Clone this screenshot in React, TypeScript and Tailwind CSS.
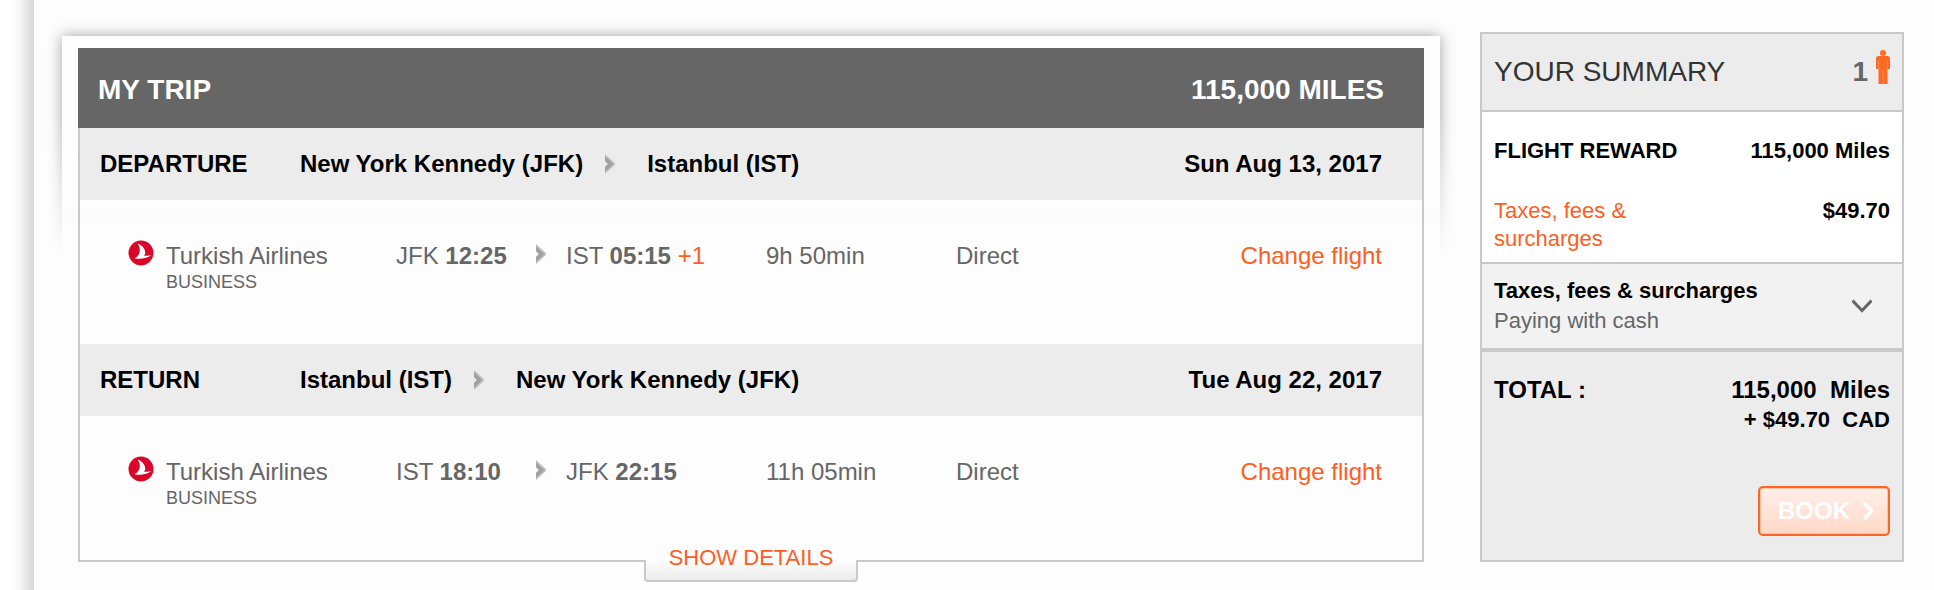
import { useState } from "react";

type Flight = {
  label: string;
  from: string;
  to: string;
  date: string;
  airline: string;
  cabin: string;
  depCode: string;
  depTime: string;
  arrCode: string;
  arrTime: string;
  dayShift?: string;
  duration: string;
  stops: string;
};

const flights: Flight[] = [
  {
    label: "DEPARTURE",
    from: "New York Kennedy (JFK)",
    to: "Istanbul (IST)",
    date: "Sun Aug 13, 2017",
    airline: "Turkish Airlines",
    cabin: "BUSINESS",
    depCode: "JFK",
    depTime: "12:25",
    arrCode: "IST",
    arrTime: "05:15",
    dayShift: "+1",
    duration: "9h 50min",
    stops: "Direct",
  },
  {
    label: "RETURN",
    from: "Istanbul (IST)",
    to: "New York Kennedy (JFK)",
    date: "Tue Aug 22, 2017",
    airline: "Turkish Airlines",
    cabin: "BUSINESS",
    depCode: "IST",
    depTime: "18:10",
    arrCode: "JFK",
    arrTime: "22:15",
    duration: "11h 05min",
    stops: "Direct",
  },
];

const Arrow = ({ className = "" }: { className?: string }) => (
  <svg className={`h-5 w-[10px] shrink-0 ${className}`} viewBox="0 0 10 20" aria-hidden="true">
    <path d="M0 0 L10 9 V11 L0 20 V13 L3 10 L0 7 Z" fill="#c4c4c4" />
    <path d="M0 2 L8.500 10 L0 18 V13 L3 10 L0 7 Z" fill="#a0a0a0" />
  </svg>
);

const AirlineLogo = () => (
  <svg className="h-[26px] w-[26px] shrink-0" viewBox="0 0 26 26" aria-hidden="true">
    <circle cx="13" cy="13" r="12.5" fill="#d9062a" />
    <path
      d="M9.500 3.500 C14 5 17 8.500 17.200 12 C17.300 13.800 16.800 15 16 15.700 C18.500 15.900 21.500 15.600 23.500 15 C20 18 12.500 19.500 6.500 18.500 C10 16.500 11.800 13.500 11.800 10 C11.800 7.500 11 5.300 9.500 3.500 Z"
      fill="#fff"
    />
  </svg>
);

const Person = () => (
  <svg className="h-[34px] w-[14px]" viewBox="0 0 14 34" aria-hidden="true">
    <circle cx="7" cy="3" r="3" fill="#ff6a22" />
    <path
      d="M2 6 H12 Q14 6 14 8.500 V19 H11.500 V34 H2.500 V19 H0 V8.500 Q0 6 2 6 Z"
      fill="#ff6a22"
    />
    <path d="M2.500 10 V19 M11.500 10 V19 M7 20 V34" stroke="#ff8f56" strokeWidth="1" />
  </svg>
);

const FlightSection = ({ flight }: { flight: Flight }) => (
  <section>
    <div className="flex h-[72px] items-center bg-[#ececec] pl-5 pr-10 font-bold text-black">
      <h2 className="w-[200px]">{flight.label}</h2>
      <span>{flight.from}</span>
      <Arrow className="ml-[22px] mr-8" />
      <span>{flight.to}</span>
      <span className="ml-auto">{flight.date}</span>
    </div>

    <div className="grid h-36 grid-cols-[268fr_140fr_30fr_200fr_190fr_226fr_200fr] items-start pl-12 pr-10 pt-10 leading-8 text-[#666]">
      <div className="flex gap-3">
        <AirlineLogo />
        <div>
          <p>{flight.airline}</p>
          <p className="text-lg leading-5">{flight.cabin}</p>
        </div>
      </div>
      <p>
        {flight.depCode} <b>{flight.depTime}</b>
      </p>
      <Arrow className="mt-1" />
      <p>
        {flight.arrCode} <b>{flight.arrTime}</b>
        {flight.dayShift && <span className="text-[#ff5e1f]"> {flight.dayShift}</span>}
      </p>
      <p>{flight.duration}</p>
      <p>{flight.stops}</p>
      <a href="#change" className="justify-self-end text-[#ff5e1f]">
        Change flight
      </a>
    </div>
  </section>
);

const MyTrip = () => {
  const [details, setDetails] = useState(false);

  return (
    <div className="relative mt-1 flex-1 px-4 pt-3">
      {/* shadow round the top of the frame, fading out down the sides */}
      <div className="pointer-events-none absolute -inset-x-4 -top-4 h-[236px] overflow-hidden px-4 pt-4 [mask-image:linear-gradient(to_bottom,black_40%,transparent)]">
        <div className="h-[260px] bg-[#fdfdfd] shadow-[0_0_14px_rgba(0,0,0,0.36)]" />
      </div>

      <div className="relative">
        <header className="flex h-20 items-center justify-between bg-[#666] pl-5 pr-10 pt-1 text-[28px] font-bold text-white">
          <h1>MY TRIP</h1>
          <span>115,000 MILES</span>
        </header>
        <div className="border-x-2 border-b-2 border-[#c9c9c9]">
          {flights.map((flight) => (
            <FlightSection key={flight.label} flight={flight} />
          ))}
        </div>
        <button
          type="button"
          aria-expanded={details}
          onClick={() => setDetails(!details)}
          className="absolute -bottom-5 left-1/2 w-[214px] -translate-x-1/2 pb-[10px] pt-1 text-[22px] leading-7 text-[#ff5e1f] before:absolute before:inset-x-0 before:bottom-0 before:h-[22px] before:rounded-b before:border-x-2 before:border-b-2 before:border-[#c9c9c9] before:bg-linear-to-b before:from-[#fdfdfd] before:to-[#ececec]"
        >
          <span className="relative">SHOW DETAILS</span>
        </button>
      </div>
    </div>
  );
};

const Summary = () => {
  const [open, setOpen] = useState(false);

  return (
    <aside className="w-[424px] shrink-0 self-start border-2 border-[#c9c9c9] bg-[#ececec] text-[22px] leading-7 text-black">
      <header className="flex h-[76px] items-center justify-between px-3 text-[28px]">
        <h2 className="text-[#333]">YOUR SUMMARY</h2>
        <div className="flex items-center gap-2">
          <span className="font-bold text-[#666]">1</span>
          <span className="pb-[10px]">
            <Person />
          </span>
        </div>
      </header>

      <dl className="border-y-2 border-[#c9c9c9] bg-white px-3 pb-[9px] pt-[25px] font-bold">
        <div className="flex justify-between">
          <dt>FLIGHT REWARD</dt>
          <dd>115,000 Miles</dd>
        </div>
        <div className="mt-8 flex justify-between">
          <dt className="w-1/2 font-normal">
            <a href="#taxes" className="text-[#ff5e1f]">
              Taxes, fees &amp; surcharges
            </a>
          </dt>
          <dd>$49.70</dd>
        </div>
      </dl>

      <button
        type="button"
        aria-expanded={open}
        onClick={() => setOpen(!open)}
        className="flex w-full items-center justify-between border-b-4 border-[#c9c9c9] bg-[#f2f2f2] py-3 pl-3 pr-[30px] text-left leading-[30px]"
      >
        <span>
          <b className="block">Taxes, fees &amp; surcharges</b>
          <span className="block text-[#666]">Paying with cash</span>
        </span>
        <svg className="h-[14px] w-5" viewBox="0 0 20 14" fill="none" aria-hidden="true">
          <path d="M0.500 1.500 L10 11.500 L19.500 1.500" stroke="#666" strokeWidth="3" />
        </svg>
      </button>

      <div className="px-3 pb-6 pt-[23px] font-bold leading-[30px]">
        <div className="flex justify-between">
          <span className="text-2xl leading-[30px]">TOTAL :</span>
          <div className="whitespace-pre text-right">
            <p className="text-2xl leading-[30px]">{"115,000  Miles"}</p>
            <p>{"+ $49.70  CAD"}</p>
          </div>
        </div>
        <button
          type="button"
          className="ml-auto mt-[51px] flex h-[50px] w-[132px] items-center justify-between rounded-[5px] border-2 border-[#ff6422] bg-linear-to-b from-[#ffeee8] to-[#ffd9c9] pl-[18px] pr-[14px] text-2xl text-white shadow-[inset_0_0_0_1px_#ffc3a8]"
        >
          BOOK
          <svg className="h-5 w-3" viewBox="0 0 12 20" fill="none" aria-hidden="true">
            <path d="M2 2 L10 10 L2 18" stroke="#fff" strokeWidth="3.500" />
          </svg>
        </button>
      </div>
    </aside>
  );
};

const App = () => {
  return (
    <div className="flex min-h-screen bg-[#fdfdfd] font-['Liberation_Sans',Arial,sans-serif] text-2xl">
      <div className="w-[34px] shrink-0 bg-[linear-gradient(to_right,#fff_30%,#f4f4f4_60%,#d6d6d6)]" />
      <main className="flex flex-1 gap-10 pb-7 pl-7 pr-[30px] pt-8">
        <MyTrip />
        <Summary />
      </main>
    </div>
  );
};

export default App;
